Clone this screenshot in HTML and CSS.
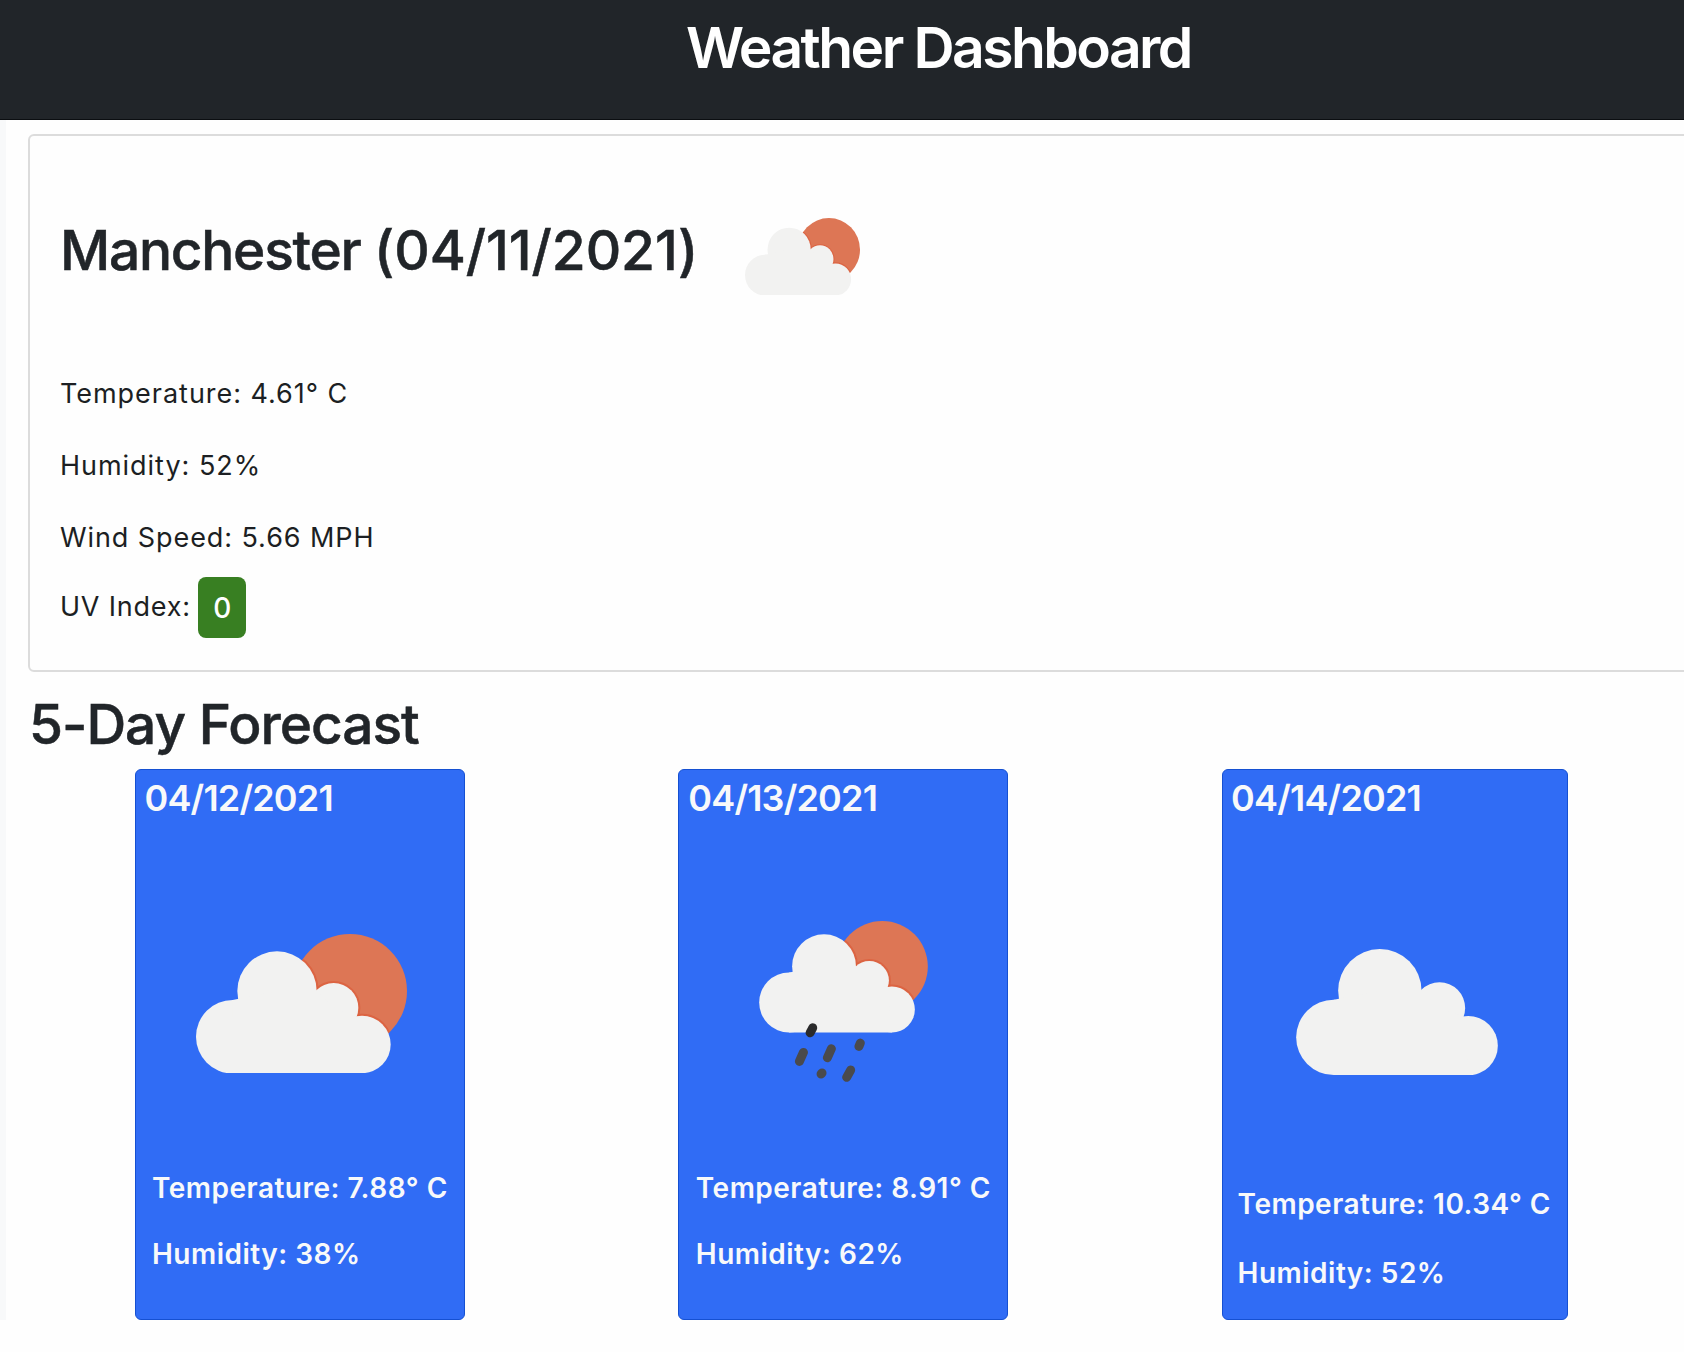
FILE: index.html
```
<!DOCTYPE html>
<html lang="en">
<head>
<meta charset="utf-8">
<title>Weather Dashboard</title>
<link rel="stylesheet" href="styles.css">
</head>
<body>
<svg class="defs" aria-hidden="true">
  <defs>
    <g id="cloud-sun">
      <circle cx="338" cy="408" r="110"/><circle cx="471" cy="271" r="119"/><circle cx="641" cy="321" r="74"/><circle cx="726" cy="431" r="86"/>
      <path d="M471 271 590 271 643 321 712 350 726 517 338 518 338 298Z"/>
    </g>
    <g id="cloud-rain">
      <circle cx="357" cy="308" r="90"/><circle cx="462" cy="199" r="96"/><circle cx="598" cy="242" r="59"/><circle cx="666" cy="329" r="69"/>
      <path d="M462 199 556 199 598 242 654 264 666 398 357 398 357 218Z"/>
    </g>
    <clipPath id="sun-disc"><circle cx="690" cy="271" r="171"/></clipPath>
    <clipPath id="rain-sun-disc"><circle cx="637" cy="200" r="137"/></clipPath>
    <symbol id="partly-cloudy" viewBox="228 100 633 418" preserveAspectRatio="none">
      <circle class="sun" cx="690" cy="271" r="171"/>
      <g clip-path="url(#sun-disc)"><use href="#cloud-sun" class="sun-shade"/></g>
      <use href="#cloud-sun" class="cloud"/>
    </symbol>
    <symbol id="rain" viewBox="267 63 507 487">
      <circle class="sun" cx="637" cy="200" r="137"/>
      <g clip-path="url(#rain-sun-disc)"><use href="#cloud-rain" class="sun-shade"/></g>
      <use href="#cloud-rain" class="cloud"/>
      <path class="drop drop-dark" d="M428 384 420 399"/>
      <path class="drop" d="M400 458 388 485M484 447 472 474M571 430 567 440M456 520 453 523M542 511 530 533"/>
    </symbol>
    <symbol id="cloudy" viewBox="258 88 605 378">
      <g class="cloud">
        <circle cx="371" cy="353" r="113"/><circle cx="509" cy="213" r="125"/><circle cx="688" cy="265" r="77"/><circle cx="774" cy="378" r="89"/>
        <path d="M509 213 634 213 688 265 762 292 774 467 371 466 371 240Z"/>
      </g>
    </symbol>
  </defs>
</svg>

<header class="site-header"><h1>Weather Dashboard</h1></header>
<div class="layout">
  <aside class="sidebar"></aside>
  <main class="content">
    <section class="current">
      <div class="current-head">
        <h2>Manchester <span class="date">(04/11/2021)</span></h2>
        <svg class="current-icon"><use href="#partly-cloudy"/></svg>
      </div>
      <p class="temp">Temperature: 4.61° C</p>
      <p class="humid">Humidity: 52%</p>
      <p class="wind">Wind Speed: 5.66 MPH</p>
      <div class="uv"><span>UV Index:</span><span class="uv-badge">0</span></div>
    </section>
    <h2 class="forecast-title">5-Day Forecast</h2>
    <section class="forecast">
      <article class="card">
        <h3>04/12/2021</h3>
        <svg class="icon icon-partly"><use href="#partly-cloudy"/></svg>
        <div class="stats"><p>Temperature: 7.88° C</p><p>Humidity: 38%</p></div>
      </article>
      <article class="card card-rain">
        <h3>04/13/2021</h3>
        <svg class="icon icon-rain"><use href="#rain"/></svg>
        <div class="stats"><p>Temperature: 8.91° C</p><p>Humidity: 62%</p></div>
      </article>
      <article class="card card-cloudy">
        <h3>04/14/2021</h3>
        <svg class="icon icon-cloudy"><use href="#cloudy"/></svg>
        <div class="stats"><p>Temperature: 10.34° C</p><p>Humidity: 52%</p></div>
      </article>
    </section>
  </main>
</div>
</body>
</html>
```
FILE: styles.css
```
* { box-sizing: border-box; }

html, body { height: 100%; }

body {
  margin: 0;
  background: #fefefe;
  color: #212529;
  font-family: Inter, "Liberation Sans", sans-serif;
  overflow: hidden;
}

h1, h2, h3, p { margin: 0; white-space: nowrap; }

.defs { display: block; width: 0; height: 0; }

.sun { fill: #dd7655; }
.sun-shade { fill: none; stroke: #dc5c3b; stroke-width: 12; stroke-opacity: 0.7; }
.cloud { fill: #f2f2f1; }
.drop { fill: none; stroke: #4a4a4c; stroke-width: 27; stroke-linecap: round; }
.drop-dark { stroke: #2a2a2b; }

.site-header {
  height: 120px;
  padding: 9px 0 0 686px;
  background: #212529;
  border-bottom: 1px solid #0b0e11;
}

.site-header h1 {
  color: #fff;
  font-size: 57px;
  font-weight: 600;
  line-height: 77px;
  letter-spacing: -2.58px;
}

.layout { display: flex; height: 1200px; }

.sidebar { flex: none; width: 6px; background: #f8f9fa; }

.content { flex: none; width: 1700px; padding: 14px 0 0 22px; }

.current {
  height: 538px;
  padding: 63px 30px 0;
  border: 2px solid #dcdcdc;
  border-radius: 6px;
  color: #1c1f23;
}

.current-head {
  display: flex;
  gap: 47px;
  height: 100px;
  margin-bottom: 75px;
}

.current-head h2 {
  color: #212529;
  font-size: 55px;
  font-weight: 500;
  line-height: 102px;
  letter-spacing: -1.25px;
  -webkit-text-stroke: 0.5px #212529;
}

.current-head .date { letter-spacing: -0.05px; }

.current-icon { width: 115px; height: 77.5px; margin-top: 18.5px; }

.current p, .uv {
  font-size: 27px;
  line-height: 40px;
  letter-spacing: 0.97px;
}

.current p + p { margin-top: 32px; }
.current .wind { letter-spacing: 0.92px; }

.uv {
  display: flex;
  align-items: center;
  justify-content: flex-start;
  gap: 7.5px;
  margin-top: 19px;
  letter-spacing: 0.78px;
}

.uv > span:first-child { margin-top: -1px; }

.uv-badge {
  width: 48px;
  height: 61px;
  border-radius: 8px;
  background: #387f22;
  color: #fff;
  font-size: 28px;
  font-weight: 500;
  line-height: 62px;
  letter-spacing: 0;
  text-align: center;
}

.forecast-title {
  padding: 8px 0 0 1px;
  font-size: 55px;
  font-weight: 500;
  line-height: 88.5px;
  letter-spacing: -1px;
  -webkit-text-stroke: 0.5px #212529;
}

.forecast {
  display: grid;
  grid-template-columns: 330px 330px 346px;
  gap: 213.8px;
  height: 551px;
  padding-left: 106.5px;
}

.card {
  display: flex;
  flex-direction: column;
  padding-bottom: 45px;
  border: 1px solid #1550d2;
  border-radius: 6px;
  background: #306cf5;
  color: #f8f9fa;
}

.card h3 {
  padding-left: 9px;
  font-size: 36px;
  font-weight: 600;
  line-height: 57px;
  letter-spacing: -0.82px;
}

.icon { flex: none; }
.icon-partly { width: 211px; height: 139.5px; margin: 107px 0 0 60.5px; }
.icon-rain { width: 169px; height: 162px; margin: 94.5px 0 0 79.7px; }
.icon-cloudy { width: 202px; height: 126px; margin: 122.5px 0 0 72.7px; }

.stats {
  margin-top: auto;
  padding-left: 16.5px;
  font-size: 28px;
  font-weight: 600;
  line-height: 40px;
  letter-spacing: 0.49px;
}

.stats p + p { margin-top: 26px; }

.card-cloudy { padding-bottom: 26px; }
.card-cloudy h3 { padding-left: 8px; }
.card-cloudy .stats { padding-left: 14.5px; }
.card-cloudy .stats p + p { margin-top: 29px; }
```
